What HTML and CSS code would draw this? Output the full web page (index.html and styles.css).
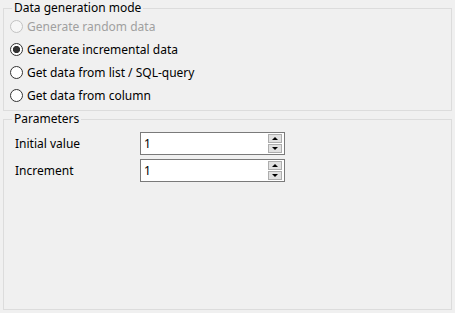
FILE: index.html
```html
<!DOCTYPE html>
<html lang="en">
<head>
  <meta charset="UTF-8">
  <title>Data generation</title>
  <link rel="stylesheet" href="styles.css">
</head>
<body>
  <div class="page">
    <fieldset class="group modes">
      <legend>Data generation mode</legend>
      <label class="option disabled"><input type="radio" name="mode" disabled> Generate random data</label>
      <label class="option"><input type="radio" name="mode" checked> Generate incremental data</label>
      <label class="option"><input type="radio" name="mode"> Get data from list / SQL-query</label>
      <label class="option"><input type="radio" name="mode"> Get data from column</label>
    </fieldset>
    <fieldset class="group params">
      <legend>Parameters</legend>
      <div class="field">
        <span class="caption">Initial value</span>
        <div class="spin">
          <span class="value">1</span>
          <div class="buttons">
            <span class="btn"><i class="up"></i></span>
            <span class="btn"><i class="down"></i></span>
          </div>
        </div>
      </div>
      <div class="field">
        <span class="caption">Increment</span>
        <div class="spin">
          <span class="value">1</span>
          <div class="buttons">
            <span class="btn"><i class="up"></i></span>
            <span class="btn"><i class="down"></i></span>
          </div>
        </div>
      </div>
    </fieldset>
  </div>
</body>
</html>
```

FILE: styles.css
```css
* {
  box-sizing: border-box;
}
body {
  margin: 0;
  background: #f0f0f0;
  color: #000;
  font-family: "Noto Sans", sans-serif;
  font-size: 12px;
}
.page {
  display: flex;
  flex-direction: column;
  height: 313px;
  padding: 1px 3px 3px;
}
.group {
  margin: 0;
  padding: 0 6px 3px;
  border: 1px solid #dcdcdc;
  min-width: 0;
}
.group legend {
  margin-left: 2px;
  padding: 0 2px;
  line-height: 14px;
}
.params {
  flex: 1;
  margin-top: 1px;
}
.option {
  display: flex;
  align-items: center;
  gap: 4px;
  height: 23px;
}
.option input {
  appearance: none;
  -webkit-appearance: none;
  margin: 0;
  width: 13px;
  height: 13px;
  border: 1px solid #333;
  border-radius: 50%;
  background: #fff;
}
.option input:checked {
  background: radial-gradient(circle, #333 3.3px, #fff 3.9px);
}
.option.disabled {
  color: #a0a0a0;
}
.option.disabled input {
  border-color: #c2c2c2;
  background: #f6f6f6;
}
.field {
  display: flex;
  align-items: center;
  margin-top: 4px;
}
.field:first-of-type {
  margin-top: 6px;
}
.caption {
  width: 130px;
  padding-left: 5px;
}
.spin {
  display: flex;
  align-items: center;
  width: 145px;
  height: 23px;
  border: 1px solid #7a7a7a;
  background: #fff;
  padding: 1px 2px 1px 3px;
}
.value {
  flex: 1;
}
.buttons {
  display: flex;
  flex-direction: column;
  gap: 1px;
}
.btn {
  display: flex;
  align-items: center;
  justify-content: center;
  width: 14px;
  height: 9px;
  border: 1px solid #adadad;
  background: #e1e1e1;
}
.btn i {
  width: 0;
  height: 0;
  border-left: 3px solid transparent;
  border-right: 3px solid transparent;
}
.btn .up {
  border-bottom: 3px solid #000;
}
.btn .down {
  border-top: 3px solid #000;
}
```
